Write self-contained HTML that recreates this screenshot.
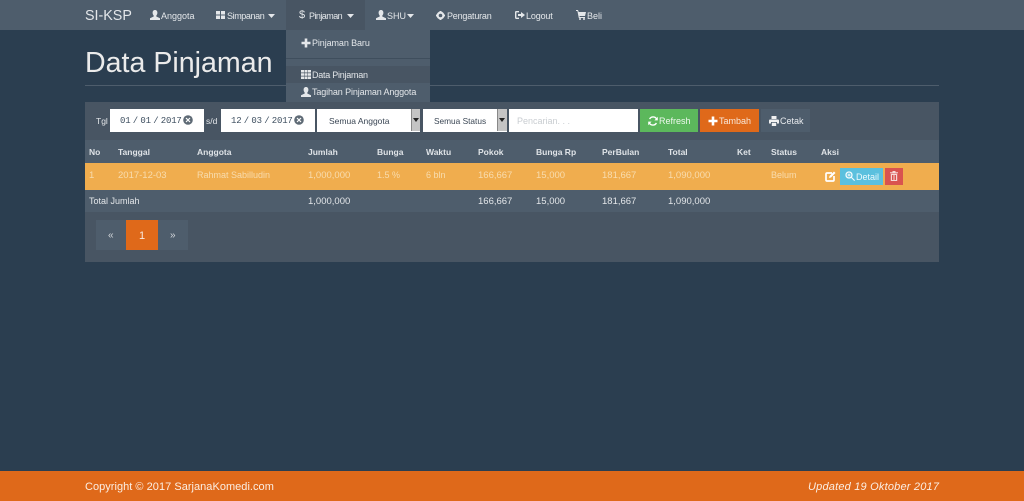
<!DOCTYPE html>
<html><head><meta charset="utf-8"><title>Data Pinjaman</title>
<style>
html,body{margin:0;padding:0;width:1024px;height:501px;overflow:hidden;background:#2b3e50;font-family:"Liberation Sans",sans-serif;color:#ebebeb}
.a{position:absolute}
.t{position:absolute;white-space:nowrap;font-size:9px;line-height:12px}
.nav{color:#e4e7ea}
.b{font-weight:bold;color:#dfe3e7;font-size:8.5px}
.r{color:#f8dcae}
.w{color:#e3e6e9}
.n{font-size:9.5px;margin-top:1px}
.d{font-family:"Liberation Mono",monospace;font-size:9px;color:#3e4f60;letter-spacing:-.2px;word-spacing:-2.8px}
svg{position:absolute;fill:currentColor}
</style></head><body>
<!-- navbar -->
<div class="a" style="left:0;top:0;width:1024px;height:30px;background:#4e5d6c"></div>
<div class="a" style="left:286px;top:0;width:79px;height:30px;background:#485563"></div>
<div class="t nav" style="left:85px;top:8px;font-size:14.3px;line-height:17px">SI-KSP</div>

<svg style="left:150px;top:10px;color:#e4e7ea" width="10" height="10" viewBox="0 0 10 10"><path d="M5 0C6.600 0 7.400 1.200 7.400 2.800C7.400 4 6.900 5 6.300 5.600V6.500L10 8.200V10H0V8.200L3.700 6.500V5.600C3.100 5 2.600 4 2.600 2.800C2.600 1.200 3.400 0 5 0Z"/></svg>
<div class="t nav" style="left:161px;top:10px">Anggota</div>

<svg style="left:216px;top:11px;color:#e4e7ea" width="9" height="8" viewBox="0 0 9 8"><path d="M0 0H4V3.500H0ZM5 0H9V3.500H5ZM0 4.500H4V8H0ZM5 4.500H9V8H5Z"/></svg>
<div class="t nav" style="left:227px;top:10px;letter-spacing:-.4px">Simpanan</div>
<svg style="left:268px;top:14px;color:#e4e7ea" width="7" height="4" viewBox="0 0 7 4"><path d="M0 0H7L3.500 4Z"/></svg>

<div class="t nav" style="left:299px;top:9px;font-size:11px">$</div>
<div class="t nav" style="left:309px;top:10px;letter-spacing:-.55px">Pinjaman</div>
<svg style="left:347px;top:14px;color:#e4e7ea" width="7" height="4" viewBox="0 0 7 4"><path d="M0 0H7L3.500 4Z"/></svg>

<svg style="left:376px;top:10px;color:#e4e7ea" width="10" height="10" viewBox="0 0 10 10"><path d="M5 0C6.600 0 7.400 1.200 7.400 2.800C7.400 4 6.900 5 6.300 5.600V6.500L10 8.200V10H0V8.200L3.700 6.500V5.600C3.100 5 2.600 4 2.600 2.800C2.600 1.200 3.400 0 5 0Z"/></svg>
<div class="t nav" style="left:387px;top:10px">SHU</div>
<svg style="left:407px;top:14px;color:#e4e7ea" width="7" height="4" viewBox="0 0 7 4"><path d="M0 0H7L3.500 4Z"/></svg>

<svg style="left:436px;top:11px;color:#e4e7ea" width="9" height="9" viewBox="0 0 10 10"><circle cx="5" cy="5" r="3.200" fill="none" stroke="currentColor" stroke-width="2.400"/><path d="M4 0H6V2H4ZM4 8H6V10H4ZM0 4H2V6H0ZM8 4H10V6H8Z"/></svg>
<div class="t nav" style="left:447px;top:10px;letter-spacing:-.2px">Pengaturan</div>

<svg style="left:515px;top:11px;color:#e4e7ea" width="10" height="8" viewBox="0 0 10 8"><path d="M4 0.700H1.200Q.7.700.7 1.200V6.800Q.7 7.300 1.200 7.300H4" fill="none" stroke="currentColor" stroke-width="1.400"/><path d="M3 3H6V1L10 4L6 7V5H3Z"/></svg>
<div class="t nav" style="left:526px;top:10px;letter-spacing:-.15px">Logout</div>

<svg style="left:576px;top:10px;color:#e4e7ea" width="10" height="10" viewBox="0 0 10 10"><path d="M0 0H2L2.700 2H10L9 6H3.500L3.700 7H9V8H2.800L1.400 1H0Z"/><circle cx="4" cy="9" r="1"/><circle cx="8" cy="9" r="1"/></svg>
<div class="t nav" style="left:587px;top:10px">Beli</div>

<!-- heading -->
<div class="t" style="left:85px;top:45px;font-size:28.6px;line-height:36px;color:#ebebeb">Data Pinjaman</div>
<div class="a" style="left:85px;top:85px;width:854px;height:1px;background:#4e5d6c"></div>

<!-- panel -->
<div class="a" style="left:85px;top:102px;width:854px;height:160px;background:#4e5d6c"></div>
<div class="a" style="left:85px;top:102px;width:854px;height:38px;background:#485563"></div>
<div class="a" style="left:85px;top:212px;width:854px;height:50px;background:#485563"></div>

<!-- dropdown -->
<div class="a" style="left:286px;top:30px;width:144px;height:72px;background:#4e5d6c"></div>
<div class="a" style="left:286px;top:58px;width:144px;height:1px;background:#3f4e5d"></div>
<div class="a" style="left:286px;top:66px;width:144px;height:17px;background:#485563"></div>
<svg style="left:301px;top:38px;color:#e4e7ea" width="10" height="10" viewBox="0 0 10 10"><path d="M3.700 .5H6.300V3.700H9.500V6.300H6.300V9.500H3.700V6.300H.5V3.700H3.700Z"/></svg>
<div class="t nav" style="left:312px;top:37px;letter-spacing:-.1px">Pinjaman Baru</div>
<svg style="left:301px;top:70px;color:#e4e7ea" width="10" height="9" viewBox="0 0 10 9"><path d="M0 0H3V2.500H0ZM3.500 0H6.500V2.500H3.500ZM7 0H10V2.500H7ZM0 3.200H3V5.700H0ZM3.500 3.200H6.500V5.700H3.500ZM7 3.200H10V5.700H7ZM0 6.500H3V9H0ZM3.500 6.500H6.500V9H3.500ZM7 6.500H10V9H7Z"/></svg>
<div class="t nav" style="left:312px;top:69px;letter-spacing:-.25px">Data Pinjaman</div>
<svg style="left:301px;top:87px;color:#e4e7ea" width="10" height="10" viewBox="0 0 10 10"><path d="M5 0C6.600 0 7.400 1.200 7.400 2.800C7.400 4 6.900 5 6.300 5.600V6.500L10 8.200V10H0V8.200L3.700 6.500V5.600C3.100 5 2.600 4 2.600 2.800C2.600 1.200 3.400 0 5 0Z"/></svg>
<div class="t nav" style="left:312px;top:86px;letter-spacing:-.12px">Tagihan Pinjaman Anggota</div>

<!-- toolbar -->
<div class="t w" style="left:96px;top:115px;font-size:8.5px">Tgl</div>
<div class="a" style="left:110px;top:109px;width:94px;height:23px;background:#fff"></div>
<div class="t d" style="left:120px;top:115px">01 / 01 / 2017</div>
<svg style="left:183px;top:115px;color:#5e6a75" width="10" height="10" viewBox="0 0 10 10"><circle cx="5" cy="5" r="4.800"/><path d="M3 3L7 7M7 3L3 7" stroke="#fff" stroke-width="1.200"/></svg>
<div class="t w" style="left:206px;top:115px;font-size:8.5px">s/d</div>
<div class="a" style="left:221px;top:109px;width:94px;height:23px;background:#fff"></div>
<div class="t d" style="left:231px;top:115px">12 / 03 / 2017</div>
<svg style="left:294px;top:115px;color:#5e6a75" width="10" height="10" viewBox="0 0 10 10"><circle cx="5" cy="5" r="4.800"/><path d="M3 3L7 7M7 3L3 7" stroke="#fff" stroke-width="1.200"/></svg>

<div class="a" style="left:317px;top:109px;width:103px;height:23px;background:#fff"></div>
<div class="t" style="left:329px;top:115px;color:#3a4654;font-size:8.5px">Semua Anggota</div>
<div class="a" style="left:411px;top:109px;width:9px;height:22px;background:#c4c4c4;border-left:1px solid #888;box-sizing:border-box"></div>
<svg style="left:413px;top:118px;color:#222" width="6" height="4" viewBox="0 0 6 4"><path d="M0 0H6L3 4Z"/></svg>

<div class="a" style="left:423px;top:109px;width:84px;height:23px;background:#fff"></div>
<div class="t" style="left:434px;top:115px;color:#3a4654;font-size:8.3px">Semua Status</div>
<div class="a" style="left:497px;top:109px;width:10px;height:22px;background:#c4c4c4;border-left:1px solid #888;box-sizing:border-box"></div>
<svg style="left:499px;top:118px;color:#222" width="6" height="4" viewBox="0 0 6 4"><path d="M0 0H6L3 4Z"/></svg>

<div class="a" style="left:509px;top:109px;width:129px;height:23px;background:#fff"></div>
<div class="t" style="left:517px;top:115px;color:#c9cdd1">Pencarian. . .</div>

<div class="a" style="left:640px;top:109px;width:58px;height:23px;background:#5cb85c"></div>
<svg style="left:648px;top:116px;color:#fff" width="10" height="10" viewBox="0 0 10 10"><path d="M8.800 3.400A4 4 0 0 0 1.600 3M1.200 6.600A4 4 0 0 0 8.400 7" fill="none" stroke="currentColor" stroke-width="1.400"/><path d="M9.800 .8V4.400H6.400ZM.2 9.200V5.600H3.600Z"/></svg>
<div class="t" style="left:659px;top:115px;color:#eef8ee">Refresh</div>

<div class="a" style="left:700px;top:109px;width:59px;height:23px;background:#df691a"></div>
<svg style="left:708px;top:116px;color:#fff" width="10" height="10" viewBox="0 0 10 10"><path d="M3.700 .5H6.300V3.700H9.500V6.300H6.300V9.500H3.700V6.300H.5V3.700H3.700Z"/></svg>
<div class="t" style="left:719px;top:115px;color:#f8e6d8">Tambah</div>

<div class="a" style="left:761px;top:109px;width:49px;height:23px;background:#4e5d6c"></div>
<svg style="left:769px;top:116px;color:#f0f0f0" width="10" height="10" viewBox="0 0 10 10"><path d="M2.500 0H7.500V3H2.500ZM1 3.500H9Q10 3.500 10 4.500V7.500H8V6H2V7.500H0V4.500Q0 3.500 1 3.500ZM2.800 6.800H7.200V10H2.800Z"/></svg>
<div class="t" style="left:780px;top:115px;color:#e8ebee">Cetak</div>

<!-- table head -->
<div class="t b" style="left:89px;top:146px">No</div>
<div class="t b" style="left:118px;top:146px">Tanggal</div>
<div class="t b" style="left:197px;top:146px">Anggota</div>
<div class="t b" style="left:308px;top:146px">Jumlah</div>
<div class="t b" style="left:377px;top:146px">Bunga</div>
<div class="t b" style="left:426px;top:146px">Waktu</div>
<div class="t b" style="left:478px;top:146px">Pokok</div>
<div class="t b" style="left:536px;top:146px">Bunga Rp</div>
<div class="t b" style="left:602px;top:146px">PerBulan</div>
<div class="t b" style="left:668px;top:146px">Total</div>
<div class="t b" style="left:737px;top:146px">Ket</div>
<div class="t b" style="left:771px;top:146px">Status</div>
<div class="t b" style="left:821px;top:146px">Aksi</div>

<!-- row -->
<div class="a" style="left:85px;top:163px;width:854px;height:27px;background:#f0ad4e"></div>
<div class="t r n" style="left:89px;top:169px">1</div>
<div class="t r n" style="left:118px;top:169px">2017-12-03</div>
<div class="t r" style="left:197px;top:169px">Rahmat Sabilludin</div>
<div class="t r n" style="left:308px;top:169px">1,000,000</div>
<div class="t r" style="left:377px;top:169px">1.5 %</div>
<div class="t r" style="left:426px;top:169px">6 bln</div>
<div class="t r n" style="left:478px;top:169px">166,667</div>
<div class="t r n" style="left:536px;top:169px">15,000</div>
<div class="t r n" style="left:602px;top:169px">181,667</div>
<div class="t r n" style="left:668px;top:169px">1,090,000</div>
<div class="t r" style="left:771px;top:169px">Belum</div>
<svg style="left:825px;top:171px;color:#fff" width="11" height="11" viewBox="0 0 11 11"><path d="M7 2H2Q1 2 1 3V9Q1 10 2 10H8Q9 10 9 9V5" fill="none" stroke="currentColor" stroke-width="1.700"/><path d="M4 7L4.500 5L9 .5L10.500 2L6 6.500Z"/></svg>
<div class="a" style="left:840px;top:168px;width:43px;height:17px;background:#5bc0de"></div>
<svg style="left:845px;top:171px;color:#f4fbfd" width="10" height="10" viewBox="0 0 10 10"><circle cx="4" cy="4" r="3" fill="none" stroke="currentColor" stroke-width="1.300"/><path d="M6 6.800L6.800 6L10 9.200L9.200 10ZM3.500 2.500H4.500V3.500H5.500V4.500H4.500V5.500H3.500V4.500H2.500V3.500H3.500Z"/></svg>
<div class="t" style="left:856px;top:171px;color:#eefafd">Detail</div>
<div class="a" style="left:885px;top:168px;width:18px;height:17px;background:#d9534f"></div>
<svg style="left:890px;top:171px;color:#f6d8d6" width="8" height="10" viewBox="0 0 8 10"><path d="M0 1.200H2.500V0H5.500V1.200H8V2.200H0ZM.8 2.800H7.200V10H.8ZM2 4V9H3V4ZM3.500 4V9H4.500V4ZM5 4V9H6V4Z" fill-rule="evenodd"/></svg>

<!-- total -->
<div class="t w" style="left:89px;top:195px">Total Jumlah</div>
<div class="t w n" style="left:308px;top:195px">1,000,000</div>
<div class="t w n" style="left:478px;top:195px">166,667</div>
<div class="t w n" style="left:536px;top:195px">15,000</div>
<div class="t w n" style="left:602px;top:195px">181,667</div>
<div class="t w n" style="left:668px;top:195px">1,090,000</div>

<!-- pagination -->
<div class="a" style="left:96px;top:220px;width:92px;height:30px;background:#4e5d6c"></div>
<div class="a" style="left:126px;top:220px;width:32px;height:30px;background:#df691a"></div>
<div class="t" style="left:108px;top:230px;font-size:10px;color:#d5d9dd">«</div>
<div class="t" style="left:139px;top:230px;font-size:11px;color:#f8eadf">1</div>
<div class="t" style="left:170px;top:230px;font-size:10px;color:#d5d9dd">»</div>

<!-- footer -->
<div class="a" style="left:0;top:471px;width:1024px;height:30px;background:#df691a"></div>
<div class="t" style="left:85px;top:481px;font-size:11px;color:#fbeee3;letter-spacing:.03px">Copyright © 2017 SarjanaKomedi.com</div>
<div class="t" style="left:808px;top:481px;font-size:11px;font-style:italic;color:#fbeee3;letter-spacing:.2px">Updated 19 Oktober 2017</div>
</body></html>
